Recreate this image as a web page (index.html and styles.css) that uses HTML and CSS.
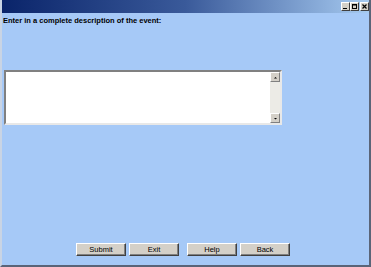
FILE: index.html
```html
<!DOCTYPE html>
<html>
<head>
<meta charset="utf-8">
<link rel="stylesheet" href="styles.css">
</head>
<body>
<div class="window">
  <div class="titlebar">
    <div class="tbtns">
      <span class="tbtn"><svg width="7" height="7" viewBox="0 0 7 7"><rect x="1" y="5" width="4" height="1" fill="#000"/></svg></span>
      <span class="tbtn"><svg width="7" height="7" viewBox="0 0 7 7"><rect x="1.5" y="1.5" width="4" height="4" fill="none" stroke="#000"/><rect x="1" y="1" width="5" height="1.5" fill="#000"/></svg></span>
      <span class="tbtn gap"><svg width="7" height="7" viewBox="0 0 7 7"><path d="M1.5 1.5 L5.5 5.5 M5.5 1.5 L1.5 5.5" stroke="#000" stroke-width="1.2"/></svg></span>
    </div>
  </div>
  <div class="content">
    <div class="label">Enter in a complete description of the event:</div>
    <div class="textarea">
      <div class="text"></div>
      <div class="scroll">
        <span class="arrow"><svg width="7" height="7" viewBox="0 0 7 7"><path d="M2 4.5 L3.5 3 L5 4.5 Z" fill="#000"/></svg></span>
        <span class="track"></span>
        <span class="arrow"><svg width="7" height="7" viewBox="0 0 7 7"><path d="M2 3 L3.5 4.5 L5 3 Z" fill="#000"/></svg></span>
      </div>
    </div>
    <div class="spacer"></div>
    <div class="buttons">
      <button class="btn">Submit</button>
      <button class="btn">Exit</button>
      <button class="btn wide">Help</button>
      <button class="btn">Back</button>
    </div>
  </div>
</div>
</body>
</html>
```
FILE: styles.css
```css
html, body {
  margin: 0;
  padding: 0;
}
body {
  width: 371px;
  height: 267px;
  overflow: hidden;
  font-family: "Liberation Sans", Arial, sans-serif;
}
.window {
  width: 371px;
  height: 267px;
  box-sizing: border-box;
  background: #a6c9f7;
  border-right: 2px solid #5a6478;
  border-bottom: 2px solid #5a6478;
  border-left: 2px solid #c9d4e4;
  display: flex;
  flex-direction: column;
}
.titlebar {
  height: 13px;
  background: linear-gradient(to right, #0a246a 0%, #3a5a9a 50%, #a6caf0 100%);
  display: flex;
  justify-content: flex-end;
  align-items: center;
  flex: none;
}
.tbtns {
  display: flex;
  gap: 0;
  margin-right: 0;
}
.tbtn {
  width: 7px;
  height: 7px;
  background: #d4d0c8;
  border: 1px solid;
  border-color: #fff #404040 #404040 #fff;
  box-sizing: content-box;
  display: flex;
}
.tbtn.gap {
  margin-left: 1px;
}
.content {
  flex: 1;
  display: flex;
  flex-direction: column;
  padding: 4px 0 9px 1px;
}
.label {
  font-size: 7.5px;
  font-weight: bold;
  color: #000;
  line-height: 8px;
}
.textarea {
  margin-top: 45px;
  margin-left: 1px;
  width: 278px;
  height: 55px;
  box-sizing: border-box;
  background: #fff;
  border: 2px solid;
  border-color: #808080 #e8e8e8 #e8e8e8 #808080;
  display: flex;
}
.text {
  flex: 1;
}
.scroll {
  width: 10px;
  display: flex;
  flex-direction: column;
  background: #ecebe6;
}
.arrow {
  width: 8px;
  height: 8px;
  background: #d4d0c8;
  border: 1px solid;
  border-color: #fff #808080 #808080 #fff;
  display: flex;
  align-items: center;
  justify-content: center;
}
.track {
  flex: 1;
}
.spacer {
  flex: 1;
}
.buttons {
  display: flex;
  gap: 3px;
  margin-left: 73px;
}
.btn {
  width: 50px;
  height: 13px;
  padding: 0;
  margin: 0;
  font-family: "Liberation Sans", Arial, sans-serif;
  font-size: 7.5px;
  color: #000;
  background: #d4d0c8;
  border: 1px solid;
  border-color: #fff #404040 #404040 #fff;
  box-shadow: inset -1px -1px 0 #808080;
  line-height: 10px;
}
.btn.wide {
  margin-left: 5px;
}
```
